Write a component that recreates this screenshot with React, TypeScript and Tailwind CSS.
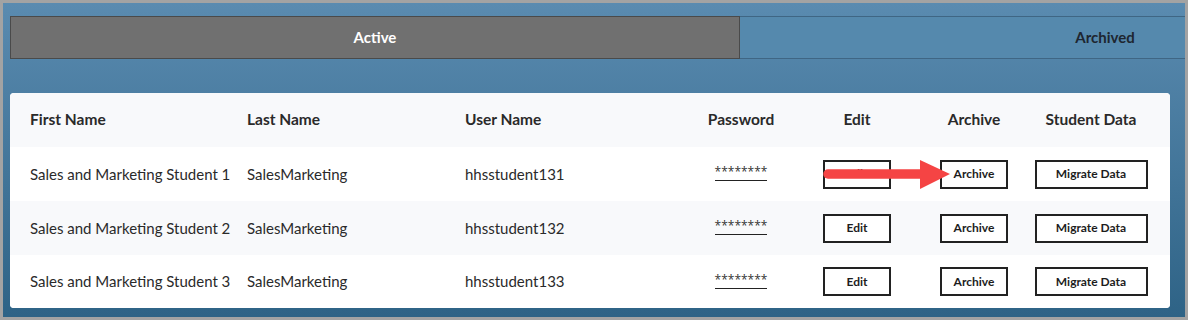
import React from "react";

const rows = [
  { first: "Sales and Marketing Student 1", last: "SalesMarketing", user: "hhsstudent131" },
  { first: "Sales and Marketing Student 2", last: "SalesMarketing", user: "hhsstudent132" },
  { first: "Sales and Marketing Student 3", last: "SalesMarketing", user: "hhsstudent133" },
];

const grid = "grid grid-cols-[237px_218px_225px_102px_130px_104px_130px_14px] items-center";

function Btn({ label, w }: { label: string; w: string }) {
  return (
    <button className={`${w} h-[29px] border-2 border-[#222] bg-white text-[12px] font-bold text-[#1d1d1d] flex items-center justify-center`}>
      {label}
    </button>
  );
}

function Arrow() {
  return (
    <svg className="absolute left-[808px] top-[12px]" width="140" height="32" viewBox="0 0 140 32">
      <line x1="10" y1="15" x2="104" y2="15" stroke="#f54444" strokeWidth="9.5" strokeLinecap="round" />
      <polygon points="102,1 132,15 102,30" fill="#f54444" />
    </svg>
  );
}

export default function App() {
  return (
    <div
      className="w-[1188px] h-[320px] border-[3px] border-[#a3a3a3] overflow-hidden bg-gradient-to-b from-[#5a8bb0] to-[#2e6386] text-[#222]"
      style={{ fontFamily: "Lato, 'Open Sans', sans-serif" }}
    >
      <div className="pt-[13px] pl-[7px] flex overflow-hidden">
        <div className="w-[730px] shrink-0 h-[43px] bg-[#707070] border border-[#4a4a4a] flex items-center justify-center text-white font-bold text-[15px]">
          Active
        </div>
        <div className="w-[730px] shrink-0 h-[43px] bg-[#5589ad] border-y border-[#3f6684] flex items-center justify-center text-[#1e2630] font-bold text-[15px]">
          Archived
        </div>
      </div>
      <div className="ml-[7px] mt-[34px] w-[1160px] rounded-[4px] bg-white overflow-hidden">
        <div className={`${grid} h-[54px] bg-[#f8f9fb] font-bold text-[15.5px] text-[#2a2a2a]`}>
          <div className="pl-[20px]">First Name</div>
          <div>Last Name</div>
          <div>User Name</div>
          <div className="text-center">Password</div>
          <div className="text-center">Edit</div>
          <div className="text-center">Archive</div>
          <div className="text-center">Student Data</div>
          <div />
        </div>
        {rows.map((r, i) => (
          <div
            key={r.user}
            className={`${grid} relative ${i === 2 ? "h-[53px]" : "h-[54px]"} ${i % 2 === 1 ? "bg-[#f8f9fb]" : "bg-white"} text-[15px] text-[#2a2a2a]`}
          >
            <div className="pl-[20px] whitespace-nowrap">{r.first}</div>
            <div>{r.last}</div>
            <div>{r.user}</div>
            <div className="flex justify-center">
              <span
                className="text-[12px] leading-[14px] pb-[1px] border-b border-[#222] mt-[-2px] text-[#333]"
                style={{ fontFamily: "'Open Sans', sans-serif" }}
              >
                ********
              </span>
            </div>
            <div className="flex justify-center">
              <Btn label="Edit" w="w-[68px]" />
            </div>
            <div className="flex justify-center">
              <Btn label="Archive" w="w-[68px]" />
            </div>
            <div className="flex justify-center">
              <Btn label="Migrate Data" w="w-[113px]" />
            </div>
            <div />
            {i === 0 && <Arrow />}
          </div>
        ))}
      </div>
    </div>
  );
}
